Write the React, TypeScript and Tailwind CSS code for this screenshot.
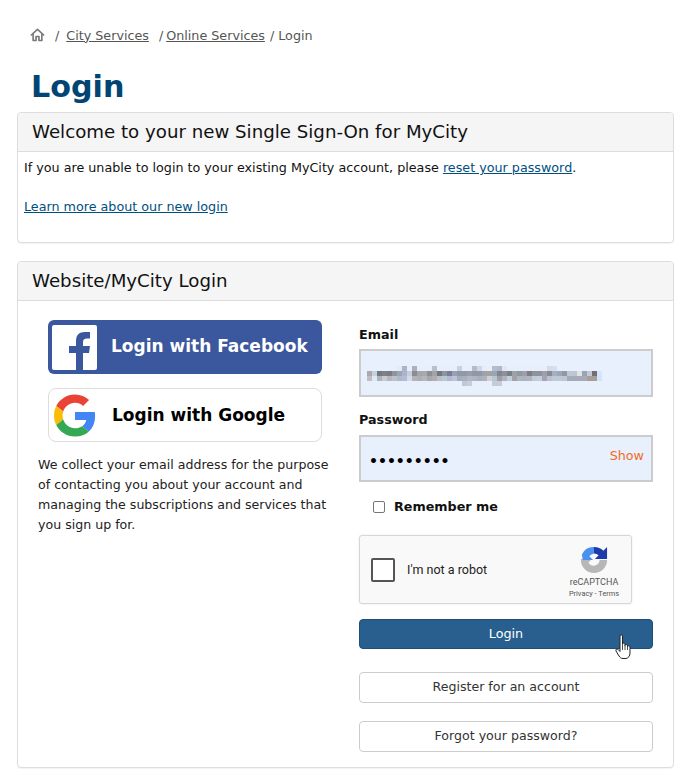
import React from "react";

const F = "[font-family:'DejaVu_Sans',Verdana,sans-serif]";

const rows: [number, number, string[]][] = [
  [366, 397, ["#e3ebf3", "#a9b4cf", "#e8eefa", "#acb0bb", "#e8eefa", "#e8eefa", "#e8eefa", "#b9bfcc", "#e8eefa", "#e8eefa", "#e8eefa", "#e8eefa", "#c9d0e0", "#e8eefa", "#e8eefa", "#b4bbca", "#d0d7e6", "#e6ecf8", "#e8eefa", "#b5bccb", "#b0b7c6", "#dfe7f7", "#e8eefa", "#e8eefa", "#e8eefa", "#e8eefa", "#e8eefa", "#e8eefa", "#e8eefa", "#e8eefa", "#d8dbe4", "#d3dff2"]],
  [371, 367, ["#b2a6ad", "#c6d2db", "#75787f", "#7e8188", "#7d7a80", "#8e959d", "#9aa7b2", "#acb4cd", "#c6cfe0", "#8b8b90", "#a3a6ad", "#a7a8b0", "#8c8f94", "#a0a3a8", "#73777f", "#8a95a3", "#7a7c9a", "#9aa1ad", "#8d98a8", "#8f9aa8", "#9b9ea8", "#9098a5", "#8f9aa5", "#9ca3ae", "#a8a29a", "#96a7b4", "#7f8690", "#8d9299", "#7d7f82", "#9ba3a6", "#8f99a3", "#9e9fae", "#7d7f85", "#8f9299", "#8d929c", "#9ba0ab", "#8a8a94", "#a5afc0", "#9ea6b8", "#8f98a8", "#bcc8d6", "#bcc5d2", "#e0e2e4", "#98a2b8", "#c3cad2", "#6e7076", "#d6e6fa"]],
  [376, 367, ["#c0bcc4", "#dcebef", "#b0b2bc", "#c9cbd4", "#b8b6bc", "#bcc2cc", "#b2b9c6", "#b3bbd6", "#d3dae8", "#b3b3b8", "#aeaeb4", "#b8b5ba", "#a8a8ac", "#b2aeb0", "#bcbec4", "#b9c9d0", "#b2b8d0", "#bcc3da", "#a5adbc", "#a9b1bc", "#b4b7c6", "#aeb5c4", "#a8b0bc", "#b0b3bc", "#d0d0d4", "#b8c6d0", "#a09ca8", "#b2b3bb", "#bcd0de", "#a3a0aa", "#b0b4bc", "#aeb3bb", "#b0b4bc", "#c0cbd8", "#c4cede", "#a5a4b0", "#b8c2d2", "#bdc9d8", "#bdc9d8", "#bdc8d4", "#a5aab8", "#a5aab8", "#a8aab6", "#a8aab6", "#a89e98", "#a89e98", "#d3e3f9"]],
  [381, 462, ["#c2c7d6", "#c8cddb"]],
  [381, 492, ["#c6cbd9", "#c6ccda"]],
];

function Mosaic() {
  return (
    <svg width="245" height="22" viewBox="362 365 245 22" className="block" shapeRendering="crispEdges">
      {rows.map(([y, x0, cols], r) =>
        cols.map((c, i) => <rect key={`${r}-${i}`} x={x0 + i * 5} y={y} width="5" height="5" fill={c} />)
      )}
    </svg>
  );
}

function Panel({ title, children, className }: { title: string; children: React.ReactNode; className: string }) {
  return (
    <section className={`border border-[#dddddd] rounded-[4px] bg-white shadow-[0_1px_1px_rgba(0,0,0,0.05)] ${className}`}>
      <div className="h-[39px] flex items-center pl-[14px] bg-[#f5f5f5] border-b border-[#dddddd] rounded-t-[4px] text-[18.2px] text-[#111]">
        {title}
      </div>
      {children}
    </section>
  );
}

function OutlineButton({ children, className }: { children: React.ReactNode; className: string }) {
  return (
    <div className={`h-[31px] pb-[2px] flex items-center justify-center border border-[#cccccc] rounded-[4px] bg-white text-[12.6px] text-[#333] ${className}`}>
      {children}
    </div>
  );
}

function Recaptcha() {
  return (
    <div className="w-[273px] h-[69px] mt-[18px] flex items-center bg-[#f9f9f9] border border-[#d6d6d6] rounded-[3px] shadow-[0_0_3px_rgba(0,0,0,0.08)] font-['Roboto',sans-serif]">
      <div className="w-[24px] h-[24px] ml-[11px] bg-white border-2 border-[#555] rounded-[2px]" />
      <span className="ml-[12px] text-[12.5px] text-[#222]">I'm not a robot</span>
      <div className="ml-auto mr-[11px] self-start pt-[10px] flex flex-col items-center w-[52px]">
        <svg width="28" height="28" viewBox="0 0 30 30">
          <path d="M1 15 A14 14 0 0 0 29 15 L21 15 A6.5 6.5 0 0 1 9 18 L12.5 14 L1 14 Z" fill="#b7b7b7" />
          <path d="M2 9 A14 14 0 0 1 15 1 L15 8 A7.5 7.5 0 0 0 10 11 L14 15 L3 15 L2 9 Z" fill="#4a90ee" />
          <path d="M15 1 A14 14 0 0 1 25 5 L29 1 L29 14 L16 14 L20 10 A7 7 0 0 0 15 8 Z" fill="#1c3aa9" />
        </svg>
        <span className="text-[9px] leading-[12px] text-[#555] mt-[2px]">reCAPTCHA</span>
        <span className="text-[7.4px] leading-[10px] text-[#555] mt-[1px] whitespace-nowrap">Privacy - Terms</span>
      </div>
    </div>
  );
}

export default function App() {
  return (
    <div className={`w-[691px] h-[783px] bg-white px-[17px] pt-[26px] overflow-hidden ${F} text-[12.72px] leading-[19.5px] text-[#111]`}>
      <nav className="h-[19px] flex items-center pl-[13px] text-[#555]">
        <svg width="15" height="14" viewBox="0 0 24 24" fill="none" stroke="#777" strokeWidth="2.8" strokeLinejoin="round" strokeLinecap="round" className="mb-[2px]">
          <path d="M1.5 12 L12 2.5 L22.5 12" />
          <path d="M4.5 10 V21.5 H9.5 V14.5 H14.5 V21.5 H19.5 V10" />
        </svg>
        <span className="ml-[10px]">/</span>
        <a className="ml-[7px] underline">City Services</a>
        <span className="ml-[10px]">/</span>
        <a className="ml-[3px] underline">Online Services</a>
        <span className="ml-[5px]">/ Login</span>
      </nav>
      <h1 className="mt-[16px] pl-[14px] h-[51px] text-[30.2px] leading-[52px] font-bold text-[#004573]">Login</h1>

      <Panel title="Welcome to your new Single Sign-On for MyCity" className="h-[131px]">
        <div className="px-[6px] pt-[6px]">
          <p>
            If you are unable to login to your existing MyCity account, please{" "}
            <a className="text-[#00507f] underline">reset your password</a>.
          </p>
          <p className="mt-[19.5px]">
            <a className="text-[#00507f] underline">Learn more about our new login</a>
          </p>
        </div>
      </Panel>

      <Panel title="Website/MyCity Login" className="mt-[18px] h-[507px]">
        <div className="flex pt-[19px] pl-[20px] pr-[20px]">
          <div className="w-[294px]">
            <div className="ml-[10px] w-[274px] h-[54px] flex items-center bg-[#3b579d] rounded-[6px] text-white font-bold text-[17px]">
              <div className="ml-[4px] w-[45px] h-[45px] bg-white rounded-[2px] flex items-end justify-center overflow-hidden">
                <svg width="45" height="45" viewBox="0 0 45 45">
                  <path d="M24 45 V28 H17 V21 H24 V16 C24 10 27 7 33 7 H38 V13.5 H35 C32 13.5 31 15 31 17 V21 H38 L37 28 H31 V45 Z" fill="#3b579d" />
                </svg>
              </div>
              <span className="ml-[14px]">Login with Facebook</span>
            </div>
            <div className="ml-[10px] mt-[14px] w-[274px] h-[54px] flex items-center bg-white border border-[#dddddd] rounded-[8px] text-black font-bold text-[17px]">
              <svg width="42" height="43" viewBox="0 0 48 48" className="ml-[5px]">
                <path fill="#EA4335" d="M24 9.5c3.54 0 6.71 1.22 9.21 3.6l6.85-6.85C35.9 2.38 30.47 0 24 0 14.62 0 6.51 5.38 2.56 13.22l7.98 6.19C12.43 13.72 17.74 9.5 24 9.5z" />
                <path fill="#4285F4" d="M46.98 24.55c0-1.57-.15-3.09-.38-4.55H24v9.02h12.94c-.58 2.96-2.26 5.48-4.78 7.18l7.73 6c4.51-4.18 7.09-10.36 7.09-17.65z" />
                <path fill="#FBBC05" d="M10.53 28.59c-.48-1.45-.76-2.99-.76-4.59s.27-3.14.76-4.59l-7.98-6.19C.92 16.46 0 20.12 0 24c0 3.88.92 7.54 2.56 10.78l7.97-6.19z" />
                <path fill="#34A853" d="M24 48c6.48 0 11.93-2.13 15.89-5.81l-7.73-6c-2.15 1.45-4.92 2.3-8.16 2.3-6.26 0-11.57-4.22-13.47-9.91l-7.98 6.19C6.51 42.62 14.62 48 24 48z" />
              </svg>
              <span className="ml-[16px] mt-[1px]">Login with Google</span>
            </div>
            <p className="mt-[13px] leading-[20px] text-[12.6px] text-[#222]">
              We collect your email address for the purpose of contacting you about your account and managing the subscriptions and services that you sign up for.
            </p>
          </div>

          <div className="ml-auto w-[294px] relative">
            <label className="block mt-[5px] font-bold">Email</label>
            <div className="mt-[4px] h-[48px] bg-[#e8f0fe] border-2 border-[#cccccc] flex items-start pt-[14px] pl-[1px]">
              <Mosaic />
            </div>
            <label className="block mt-[13px] font-bold">Password</label>
            <div className="mt-[6px] h-[47px] bg-[#e8f0fe] border-2 border-[#cccccc] flex items-center pl-[8px] pr-[7px] relative">
              <span className="text-[14px] leading-[20px] font-bold text-black mt-[4px]">•••••••••</span>
              <span className="ml-auto text-[#f26a1b] mb-[6px]">Show</span>
            </div>
            <label className="flex items-center mt-[15px] ml-[14px] h-[20px] font-bold">
              <span className="w-[12px] h-[12px] border border-[#767676] rounded-[2px] bg-white" />
              <span className="ml-[9px]">Remember me</span>
            </label>
            <Recaptcha />
            <div className="mt-[15px] h-[30px] flex items-center justify-center bg-[#285f8f] border border-[#1f4e79] rounded-[4px] text-white text-[12.72px]">
              Login
            </div>
            <OutlineButton className="mt-[23px]">Register for an account</OutlineButton>
            <OutlineButton className="mt-[18px]">Forgot your password?</OutlineButton>

            <svg width="18" height="26" viewBox="0 0 18 26" className="absolute left-[256px] top-[314px]">
              <path d="M5 2 C5 0.5 7.5 0.5 7.5 2 V10 C7.5 8.8 10 8.8 10 10 V11.5 C10 10.3 12.5 10.3 12.5 11.5 V12.5 C12.5 11.5 15 11.5 15 13 V19 C15 22 13.5 24 11 24.5 H8 C6 24.5 5 23.5 4 22 L1 17 C0.3 15.5 2 14.3 3.2 15.5 L5 17.5 Z" fill="#fff" stroke="#222" strokeWidth="1" strokeLinejoin="round" />
              <path d="M7.5 10 V16 M10 11 V16 M12.5 12 V16" stroke="#222" strokeWidth="0.8" />
            </svg>
          </div>
        </div>
      </Panel>
    </div>
  );
}
